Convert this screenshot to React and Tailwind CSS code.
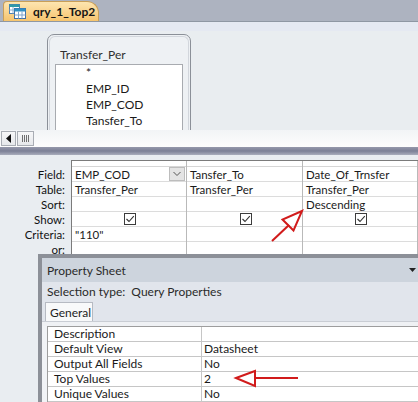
import React from "react";

const QueryIcon = () => (
  <svg width="17" height="15" viewBox="0 0 17 15">
    <rect x="0.5" y="0.5" width="10" height="9" fill="#ffffff" stroke="#4d7fb0" />
    <rect x="0.5" y="0.5" width="10" height="2.5" fill="#2f9aa6" />
    <line x1="4" y1="3" x2="4" y2="9.5" stroke="#8fb0d0" />
    <line x1="0.5" y1="6" x2="10.5" y2="6" stroke="#8fb0d0" />
    <rect x="5.5" y="4.5" width="11" height="10" fill="#ffffff" stroke="#3f6fa6" />
    <rect x="5.5" y="4.5" width="11" height="3" fill="#2f8fc4" />
    <line x1="9.5" y1="7.5" x2="9.5" y2="14.5" stroke="#7fa4cc" />
    <line x1="13" y1="7.5" x2="13" y2="14.5" stroke="#7fa4cc" />
    <line x1="5.5" y1="11" x2="16.5" y2="11" stroke="#7fa4cc" />
  </svg>
);

const Check = () => (
  <div className="w-[12px] h-[12px] border border-[#3c3c3c] bg-white flex items-center justify-center">
    <svg width="10" height="10" viewBox="0 0 10 10">
      <path d="M1.5 5 L4 7.5 L8.8 2.2" fill="none" stroke="#333" strokeWidth="1.1" />
    </svg>
  </div>
);

const labels = ["Field:", "Table:", "Sort:", "Show:", "Criteria:", "or:"];

const cols = [
  { w: "w-[115px]", cells: ["EMP_COD", "Transfer_Per", "", "check", '"110"', ""], drop: true },
  { w: "w-[116px]", cells: ["Tansfer_To", "Transfer_Per", "", "check", "", ""] },
  { w: "flex-1", cells: ["Date_Of_Trnsfer", "Transfer_Per", "Descending", "check", "", ""] },
];

const props = [
  ["Description", ""],
  ["Default View", "Datasheet"],
  ["Output All Fields", "No"],
  ["Top Values", "2"],
  ["Unique Values", "No"],
  ["", ""],
];

export default function App() {
  return (
    <div className="relative w-[418px] h-[402px] overflow-hidden bg-[#e9edf1] text-[#1a1a1a] [font-family:Lato,'Open_Sans',sans-serif] text-[11.5px] leading-[15px]">
      {/* tab bar */}
      <div className="h-[22px] bg-[#adb3c0] border-b border-[#8f97a3] flex items-end pl-[3px]">
        <div className="h-[20px] w-[96px] rounded-tl-[4px] rounded-tr-[12px] bg-gradient-to-b from-[#fde5b0] to-[#f6c46e] border border-b-0 border-[#c99f58] flex items-center gap-[7px] pl-[5px]">
          <QueryIcon />
          <span className="font-bold text-[12px] text-[#141414]">qry_1_Top2</span>
        </div>
      </div>

      {/* design surface */}
      <div className="h-[108px] overflow-hidden flex flex-col">
        <div className="h-[9px] bg-[#e5e9f2] shrink-0" />
        <div className="flex-1 bg-[#e9edf0] pt-[3px] pl-[47px]">
          <div className="w-[144px] h-[140px] rounded-t-[7px] border border-[#8b9098] bg-[#eef1f4] p-[1px]">
            <div className="h-full rounded-t-[6px] border border-[#d2d6dc] border-b-0">
              <div className="h-[27px] flex items-end pb-[2px] pl-[10px] text-[12px] text-[#303030]">Transfer_Per</div>
              <div className="ml-[5px] mr-[5px] h-[120px] bg-white border border-[#a8abb0] pl-[30px] text-[12px] leading-[16px] text-[#1a1a1a]">
                <div>*</div>
                <div>EMP_ID</div>
                <div>EMP_COD</div>
                <div>Tansfer_To</div>
              </div>
            </div>
          </div>
        </div>
      </div>

      {/* scroll bar */}
      <div className="h-[17px] bg-gradient-to-b from-[#f2f4f6] to-[#fdfdfd] flex items-center gap-[1px] pl-[1px]">
        <div className="w-[15px] h-[15px] border border-[#a9adb4] bg-gradient-to-b from-[#f7f7f8] to-[#e6e8eb] flex items-center justify-center">
          <svg width="6" height="9" viewBox="0 0 6 9"><path d="M5 0 L0 4.5 L5 9 Z" fill="#111" /></svg>
        </div>
        <div className="w-[17px] h-[15px] border border-[#a9adb4] bg-gradient-to-b from-[#f7f7f8] to-[#e6e8eb] flex items-center justify-center gap-[1px]">
          <div className="w-[1px] h-[7px] bg-[#707070]" />
          <div className="w-[1px] h-[7px] bg-[#707070]" />
          <div className="w-[1px] h-[7px] bg-[#707070]" />
          <div className="w-[1px] h-[7px] bg-[#707070]" />
        </div>
      </div>

      {/* splitter */}
      <div className="h-[8px] bg-gradient-to-b from-[#9598ab] via-[#7c8096] to-[#a9adbc]" />

      {/* lower pane */}
      <div className="relative h-[247px] bg-[#e9edf1] pt-[5px]">
        <div className="flex">
          <div className="w-[71px] pt-[7px] pr-[6px] text-right text-[#111]">
            {labels.map((l) => (
              <div key={l} className="h-[15px]">{l}</div>
            ))}
          </div>
          <div className="flex-1 flex border-t border-l border-[#7b7b7b] bg-white h-[120px]">
            {cols.map((c, ci) => (
              <div key={ci} className={`${c.w} border-r border-[#b9b9b9] flex flex-col`}>
                <div className="h-[6px] border-b border-[#d6d6d6] shrink-0" />
                {c.cells.map((t, ri) => (
                  <div key={ri} className="h-[15px] shrink-0 border-b border-[#dcdcdc] flex items-center justify-between pl-[3px] pr-[1px]">
                    {t === "check" ? (
                      <div className="w-full flex justify-center"><Check /></div>
                    ) : (
                      <span className="whitespace-nowrap">{t}</span>
                    )}
                    {c.drop && ri === 0 && (
                      <div className="w-[16px] h-[14px] bg-[#e4e4e4] border border-[#bdbdbd] flex items-center justify-center">
                        <svg width="10" height="6" viewBox="0 0 10 6"><path d="M1.5 1 L5 4.5 L8.5 1" fill="none" stroke="#555" strokeWidth="1" /></svg>
                      </div>
                    )}
                  </div>
                ))}
              </div>
            ))}
          </div>
        </div>

        {/* property sheet window */}
        <div className="absolute left-[38px] top-[99px] right-0 bottom-0 overflow-hidden border-l-4 border-t-4 border-[#8c9098] bg-[#f1f3f6]">
          <div className="h-[24px] bg-[#cdd4dd] flex items-center justify-between pl-[5px] pr-[2px] text-[12px] text-[#2a2a2a]">
            <span>Property Sheet</span>
            <svg width="7" height="5" viewBox="0 0 7 5"><path d="M0 0 L7 0 L3.5 4 Z" fill="#222" /></svg>
          </div>
          <div className="h-[19px] bg-[#e1e5ec] flex items-center pl-[5px] text-[12px] text-[#2a2a2a] whitespace-pre">Selection type:  Query Properties</div>
          <div className="h-[21px] bg-[#e1e5ec] flex items-end pl-[3px] border-b border-[#c9cdd4]">
            <div className="h-[19px] w-[48px] bg-[#f8f9fa] border border-b-0 border-[#b6bac2] flex items-center pl-[4px] text-[12px] text-[#1e1e1e]">General</div>
          </div>
          <div className="h-[4px] bg-[#eff1f4]" />
          <div className="ml-[5px] border-t border-l border-[#9d9d9d] bg-white text-[12px]">
            {props.map(([k, v], i) => (
              <div key={i} className="flex h-[15px] border-b border-[#c6c6c6]">
                <div className="w-[154px] border-r border-[#c6c6c6] pl-[6px] leading-[14px]">{k}</div>
                <div className="flex-1 pl-[2px] leading-[14px]">{v}</div>
              </div>
            ))}
          </div>
        </div>
      </div>

      {/* annotation arrows */}
      <svg className="absolute left-0 top-0 pointer-events-none" width="418" height="402" viewBox="0 0 418 402">
        <g fill="none" stroke="#d11b1b" strokeWidth="2" strokeLinejoin="miter">
          <line x1="272" y1="241" x2="289" y2="225" />
          <polygon points="302,211 282.5,219.5 293.5,230.5" />
          <line x1="298" y1="378" x2="255" y2="378" />
          <polygon points="236,378 255,371 255,386" />
        </g>
      </svg>
    </div>
  );
}
